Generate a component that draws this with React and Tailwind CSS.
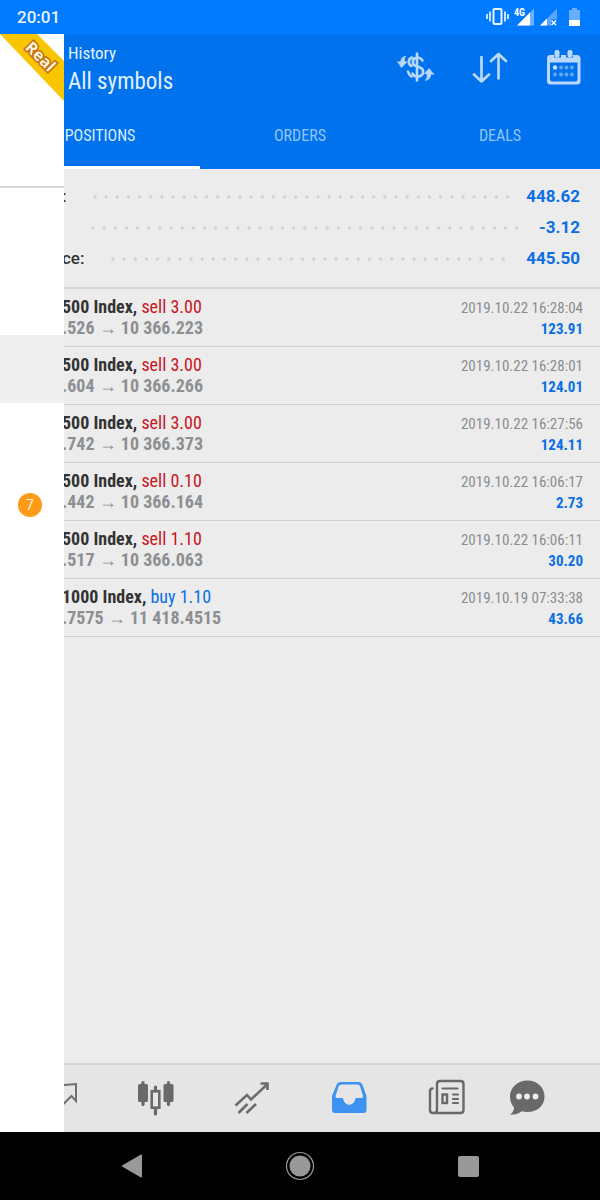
import React from "react";

const tabs = ["POSITIONS", "ORDERS", "DEALS"];

const summary = [
  { label: ":", value: "448.62", dots: "ml-[27px] mr-4" },
  { label: "", value: "-3.12", dots: "ml-[29px] mr-5" },
  { label: "ce:", value: "445.50", dots: "ml-[27px] mr-3" },
];

const positions = [
  { symbol: "500 Index", side: "sell", volume: "3.00", open: ".526", close: "10 366.223", time: "2019.10.22 16:28:04", profit: "123.91" },
  { symbol: "500 Index", side: "sell", volume: "3.00", open: ".604", close: "10 366.266", time: "2019.10.22 16:28:01", profit: "124.01" },
  { symbol: "500 Index", side: "sell", volume: "3.00", open: ".742", close: "10 366.373", time: "2019.10.22 16:27:56", profit: "124.11" },
  { symbol: "500 Index", side: "sell", volume: "0.10", open: ".442", close: "10 366.164", time: "2019.10.22 16:06:17", profit: "2.73" },
  { symbol: "500 Index", side: "sell", volume: "1.10", open: ".517", close: "10 366.063", time: "2019.10.22 16:06:11", profit: "30.20" },
  { symbol: "1000 Index", side: "buy", volume: "1.10", open: ".7575", close: "11 418.4515", time: "2019.10.19 07:33:38", profit: "43.66" },
];

function StatusBar() {
  return (
    <div className="flex h-[34px] shrink-0 items-center justify-between bg-[#007aff] pl-[17px] pr-5">
      <span className="font-[Roboto] text-[17px] font-medium leading-6 text-[#e6f3ff]">20:01</span>
      <svg width="94" height="20" viewBox="486 7 94 20" fill="none" aria-hidden="true">
        <rect x="493.5" y="9" width="8" height="15" rx="1" stroke="#e8f4ff" strokeWidth="2" />
        <path d="M487 14v5M490 11.500v10M505 11.500v10M508 14v5" stroke="#e8f4ff" strokeWidth="1.700" />
        <text x="514" y="16" fontSize="10" fontWeight="700" fontFamily="Roboto Condensed" fill="#fff">4G</text>
        <path d="M517 25.500 534 8.500v17z" fill="#6cb1ff" />
        <path d="M517 25.500 530 12.500v13z" fill="#fff" />
        <path d="M540 25.500 557 8.500v11h-6v6z" fill="#57a6ff" />
        <path d="M540 25.500 547 18.500v7z" fill="#fff" />
        <path d="m551.500 20.500 4.500 4.500m0-4.500-4.500 4.500" stroke="#fff" strokeWidth="1.500" />
        <path d="M569 10h3V8h5v2h3v10h-11z" fill="#66aeff" />
        <path d="M569 20h11v6h-11z" fill="#fff" />
      </svg>
    </div>
  );
}

function CurrencyIcon() {
  return (
    <svg width="38" height="30" viewBox="398 52 38 30" fill="none" stroke="#b9d8fb" strokeLinecap="round">
      <path d="M418 53.500v27" strokeWidth="2.600" />
      <path d="M423.500 60.500c-1.500-2.500-4.500-3.500-7-2.500-3.500 1.400-3.500 6.500 0 7.800l4.500 1.700c4.500 1.700 4.300 8-1 9-3 .5-5.500-.8-6.500-3" strokeWidth="2.600" />
      <path d="M413 57.500c-4 1.500-4.500 6.500-.5 8.500M409 71.500c.5 2.300 1.500 3.900 3.500 5" strokeWidth="2.600" />
      <path d="M398.500 61.500l3 .5c.3-3 2-5.500 5.500-6-1.500 1.700-1.800 3.500-1.500 5.500l2.500.5-5.500 5.500z" fill="#b9d8fb" strokeWidth=".5" />
      <path d="M435 74.500l-3-.5c-.3 3.500-2 6-6 6.500 2-2 2.500-3.800 2-6.500l-2.500-.5 4.500-5z" fill="#b9d8fb" strokeWidth=".5" />
    </svg>
  );
}

function SortIcon() {
  return (
    <svg width="36" height="32" viewBox="472 51 36 32" fill="none" stroke="#b9d8fb" strokeWidth="2.700" strokeLinecap="round" strokeLinejoin="round">
      <path d="M481.500 57v24.500M474 74.500l7.500 7 7.500-7M498.500 78.500V54M491 61l7.500-7 7.500 7" />
    </svg>
  );
}

function CalendarIcon() {
  return (
    <svg width="34" height="36" viewBox="547 49 34 36">
      <path fillRule="evenodd" fill="#b9d8fb" d="M550 55h4v2.500h7V55h5v2.500h7V55h4q3.500 0 3.500 3.500v22.500q0 3.500-3.500 3.500h-26.500q-3.500 0-3.500-3.500V58.500q0-3.500 3-3.500zM550 62.500v17q0 2 2 2h23.500q2 0 2-2v-17z" />
      <rect x="554.500" y="50" width="5" height="7.500" rx="2" fill="#b9d8fb" />
      <rect x="567.500" y="50" width="5" height="7.500" rx="2" fill="#b9d8fb" />
      <circle cx="555" cy="67.500" r="2.200" fill="#c8e0fc" />
      {[561, 566.5, 572].map((x) => (
        <circle key={x} cx={x} cy="67.500" r="2" fill="#62a8f5" />
      ))}
      {[555, 561, 566.5, 572].map((x) => (
        <circle key={x} cx={x} cy="74.500" r="2" fill="#62a8f5" />
      ))}
    </svg>
  );
}

const actions = [
  { label: "Currency", Icon: CurrencyIcon },
  { label: "Sort", Icon: SortIcon },
  { label: "Period", Icon: CalendarIcon },
];

function Header() {
  return (
    <header className="shrink-0 bg-[#0072ee]">
      <div className="flex h-[69px] items-start justify-between pl-[68px] pr-[17px]">
        <div className="pt-[7px] text-[#e4f1ff]">
          <p className="text-[17px] leading-6">History</p>
          <h1 className="text-[23px] leading-[34px]">All symbols</h1>
        </div>
        <div className="flex items-center gap-9 pt-[15px]">
          {actions.map(({ label, Icon }) => (
            <button key={label} type="button" aria-label={label} className="flex w-[38px] justify-center">
              <Icon />
            </button>
          ))}
        </div>
      </div>
      <nav className="grid h-[66px] grid-cols-3">
        {tabs.map((tab, i) => (
          <button
            key={tab}
            type="button"
            className={i === 0
              ? "border-b-3 border-white pt-[3px] text-base text-[#dcecff]"
              : "border-b-3 border-transparent pt-[3px] text-base text-[#94c6fa]"}
          >
            {tab}
          </button>
        ))}
      </nav>
    </header>
  );
}

function Summary() {
  return (
    <dl className="flex h-[120px] shrink-0 flex-col border-b-2 border-[#d6d6d6] pl-[62px] pr-5 pt-3 font-[Roboto] text-[17px] font-medium">
      {summary.map((row) => (
        <div key={row.value} className="flex h-[31px] items-center">
          <dt className="text-[#333]">{row.label}</dt>
          <dd className="flex flex-1 items-center font-bold text-[#0a6fe6]">
            <svg className={`h-1 flex-1 ${row.dots}`} aria-hidden="true">
              <line x1="2" y1="2" x2="100%" y2="2" stroke="#d2d2d2" strokeWidth="3.500" strokeLinecap="round" strokeDasharray="0 11.150" />
            </svg>
            {row.value}
          </dd>
        </div>
      ))}
    </dl>
  );
}

function PositionRow({ item }) {
  return (
    <li className="flex h-[58px] items-start justify-between border-b border-[#d0d0d0] pl-[62px] pr-[17px] pt-[7px]">
      <div className="text-lg">
        <p className="leading-[22px] text-[#333]">
          <span className="font-bold">{item.symbol},</span>{" "}
          <span className={item.side === "sell" ? "text-[#c8141e]" : "text-[#0a6fe6]"}>
            {item.side} {item.volume}
          </span>
        </p>
        <p className="font-bold leading-5 text-[#8d8f92]">
          {item.open} → {item.close}
        </p>
      </div>
      <div className="text-right text-[15px]">
        <p className="leading-6 text-[#8a8c8f]">{item.time}</p>
        <p className="font-bold leading-[18px] text-[#0a6fe6]">{item.profit}</p>
      </div>
    </li>
  );
}

function Drawer() {
  return (
    <aside className="absolute bottom-0 left-0 top-0 w-16 bg-white">
      <div className="h-[154px] border-b-2 border-[#d8d8d8]">
        <svg width="64" height="68" viewBox="0 0 64 68">
          <path d="M0 0h37l27 27v40z" fill="#f8c500" />
          <text
            x="40" y="28" transform="rotate(45 40 23)" textAnchor="middle"
            fontFamily="Open Sans" fontSize="16" fontWeight="700"
            fill="#fff3df" stroke="#c56f10" strokeWidth="3" paintOrder="stroke"
          >
            Real
          </text>
        </svg>
      </div>
      <div className="mt-[147px] h-[68px] bg-[#efefef]" />
      <div className="flex h-[204px] items-center justify-center pr-1">
        <span className="flex h-6 w-6 items-center justify-center rounded-full bg-[#ff9b17] font-[Roboto] text-sm text-[#fff3df]">7</span>
      </div>
    </aside>
  );
}

function QuotesIcon() {
  return (
    <svg width="38" height="38" viewBox="40 1077 38 38" fill="none" stroke="#6f6f6f" strokeWidth="2">
      <path d="m58 1084.500 18-1.500v17l-4.500-5-8 8" />
    </svg>
  );
}

function ChartIcon() {
  return (
    <svg width="38" height="38" viewBox="137 1077 38 38" fill="#696969">
      <rect x="138" y="1083" width="10" height="18" rx="1.500" />
      <rect x="163.500" y="1083" width="10" height="18" rx="1.500" />
      <path d="M143 1081.500v22M168.500 1081.500v22M155.500 1086v4M155.500 1107v6" stroke="#696969" strokeWidth="3.200" strokeLinecap="round" />
      <rect x="151.700" y="1090.200" width="7.600" height="16.500" fill="none" stroke="#696969" strokeWidth="2.600" />
    </svg>
  );
}

function TradeIcon() {
  return (
    <svg width="38" height="38" viewBox="233 1077 38 38" fill="none" stroke="#6c6c6c" strokeWidth="2.600">
      <path d="m235.500 1104.500 11.500-10.500 4 4.500 16.500-15.500M238.500 1112l9-9M246.500 1112l9.500-9M260.500 1082.500h7v6.500" />
    </svg>
  );
}

function HistoryIcon() {
  return (
    <svg width="38" height="38" viewBox="329 1077 38 38">
      <path
        fillRule="evenodd"
        fill="#3d92ef"
        d="M340 1081h17.500q3 0 4 3l4 11v14q0 3-3 3h-28.500q-3 0-3-3v-14l4.500-11q1-3 4.500-3zM340.500 1083.500q-2 0-2.700 1.500l-3.300 10q-.5 2 1.500 2h6c1 9 11.500 9 12.500 0h6q2 0 1.500-2l-3-10q-.7-1.500-2.200-1.500z"
      />
    </svg>
  );
}

function NewsIcon() {
  return (
    <svg width="38" height="38" viewBox="426 1077 38 38" fill="none" stroke="#696969" strokeWidth="2.400" strokeLinecap="round">
      <path d="M431.500 1087.500q-2.500 0-2.500 3V1109q0 3 3 3h27.500q3 0 3-3v-26q0-3-3-3h-20.500q-3 0-3 3v26q0 3-3 3" />
      <path d="M441.500 1087.500h15M452 1093.500h5M452 1098h5M452 1102h5" strokeWidth="2.200" />
      <rect x="441.500" y="1093.500" width="4.500" height="8.500" />
    </svg>
  );
}

function ChatIcon() {
  return (
    <svg width="38" height="38" viewBox="509 1077 38 38">
      <path fill="#696969" d="M527.500 1079.500c10 0 17 7 17 16s-7 15.500-17 15.500c-2 0-4-.3-5.700-.8-3.300 2.500-7 3.600-11.800 3.300 2.500-1.500 4-4 4-7-2.500-3-4-6.500-4-11 0-9 7.500-16 17.500-16z" />
      {[519, 527, 535.5].map((x) => (
        <circle key={x} cx={x} cy="1095.500" r="2.900" fill="#ececec" />
      ))}
    </svg>
  );
}

const sections = [
  { label: "Quotes", Icon: QuotesIcon },
  { label: "Chart", Icon: ChartIcon },
  { label: "Trade", Icon: TradeIcon },
  { label: "History", Icon: HistoryIcon },
  { label: "News", Icon: NewsIcon },
];

function BottomBar() {
  return (
    <nav className="flex h-[69px] shrink-0 border-t-2 border-[#d4d4d4] bg-[#e5e5e5] pb-1 pl-[11px] pr-[38px]">
      {sections.map(({ label, Icon }) => (
        <button key={label} type="button" aria-label={label} className="flex flex-1 items-center justify-center">
          <Icon />
        </button>
      ))}
      <button type="button" aria-label="Messages" className="flex w-[68px] items-center justify-center">
        <ChatIcon />
      </button>
    </nav>
  );
}

function SystemNav() {
  return (
    <div className="grid h-[68px] shrink-0 grid-cols-3 bg-black px-12">
      <button type="button" aria-label="Back" className="flex items-center justify-center">
        <svg width="22" height="24" viewBox="0 0 22 24">
          <path d="M20 1.500v21L2 12z" fill="#999" stroke="#999" strokeWidth="2" strokeLinejoin="round" />
        </svg>
      </button>
      <button type="button" aria-label="Home" className="flex items-center justify-center">
        <svg width="30" height="30" viewBox="0 0 30 30">
          <circle cx="15" cy="15" r="13.500" fill="none" stroke="#999" strokeWidth="1.200" />
          <circle cx="15" cy="15" r="10.500" fill="#999" />
        </svg>
      </button>
      <button type="button" aria-label="Recent apps" className="flex items-center justify-center">
        <span className="h-[21px] w-[21px] rounded-xs bg-[#999]" />
      </button>
    </div>
  );
}

export default function App() {
  return (
    <div className="flex min-h-screen flex-col bg-[#ececec] font-['Roboto_Condensed','Liberation_Sans_Narrow',Roboto,sans-serif]">
      <StatusBar />
      <div className="relative flex flex-1 flex-col">
        <Header />
        <main className="flex-1">
          <Summary />
          <ul>
            {positions.map((item) => (
              <PositionRow key={item.time} item={item} />
            ))}
          </ul>
        </main>
        <BottomBar />
        <Drawer />
      </div>
      <SystemNav />
    </div>
  );
}
